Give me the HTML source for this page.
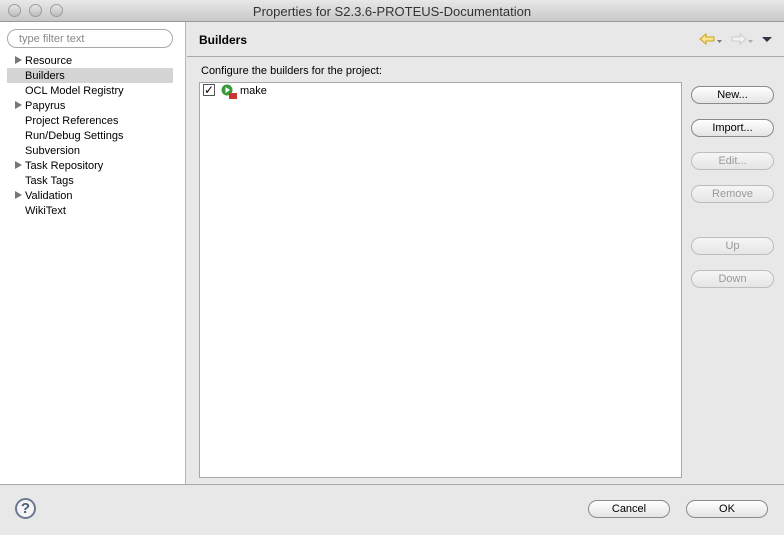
<!DOCTYPE html>
<html><head><style>
*{margin:0;padding:0;box-sizing:border-box}
body{width:784px;height:535px;background:#e8e8e8;font-family:"Liberation Sans",sans-serif;font-size:11px;color:#000;position:relative;overflow:hidden}
.a{position:absolute}
.title{left:0;top:0;width:784px;height:22px;background:linear-gradient(#e8e8e8,#c8c8c8);border-bottom:1px solid #9a9a9a;text-align:center;font-size:13px;line-height:23px;color:#333}
.dot{width:13px;height:13px;border-radius:50%;background:linear-gradient(#e6e6e6,#bdbdbd);border:1px solid #9c9c9c;top:4px}
.left{left:0;top:22px;width:186px;height:462px;background:#fff;border-right:1px solid #b5b5b5}
.filter{left:7px;top:29px;width:166px;height:19px;border:1px solid #a8a8a8;border-radius:10px;color:#888;font-size:11px;line-height:19px;padding-left:11px;background:#fff}
.item{left:25px;height:15px;line-height:15px;font-size:11px}
.tri{left:15px;width:0;height:0;border-left:7px solid #777;border-top:4px solid transparent;border-bottom:4px solid transparent}
.btn{left:691px;width:83px;height:18px;border:1px solid #8a8a8a;border-radius:9px;background:linear-gradient(#fff,#e4e4e4);text-align:center;line-height:17px;font-size:11px}
.dis{color:#999;border-color:#bdbdbd;background:linear-gradient(#f6f6f6,#e6e6e6)}
</style></head><body>
<div class="a title">Properties for S2.3.6-PROTEUS-Documentation</div>
<div class="a dot" style="left:8px"></div><div class="a dot" style="left:29px"></div><div class="a dot" style="left:50px"></div>
<div class="a left"></div>
<div class="a filter">type filter text</div>
<div class="a" style="left:7px;top:68px;width:166px;height:15px;background:#d4d4d4"></div>
<div class="a tri" style="top:56px"></div><div class="a item" style="top:54px">Resource</div>
<div class="a item" style="top:69px">Builders</div>
<div class="a item" style="top:84px">OCL Model Registry</div>
<div class="a tri" style="top:101px"></div><div class="a item" style="top:99px">Papyrus</div>
<div class="a item" style="top:114px">Project References</div>
<div class="a item" style="top:129px">Run/Debug Settings</div>
<div class="a item" style="top:144px">Subversion</div>
<div class="a tri" style="top:161px"></div><div class="a item" style="top:159px">Task Repository</div>
<div class="a item" style="top:174px">Task Tags</div>
<div class="a tri" style="top:191px"></div><div class="a item" style="top:189px">Validation</div>
<div class="a item" style="top:204px">WikiText</div>
<div class="a" style="left:187px;top:56px;width:597px;height:1px;background:#a8a8a8"></div>
<div class="a" style="left:199px;top:33px;font-weight:bold;font-size:12px">Builders</div>
<svg class="a" style="left:698px;top:31px" width="80" height="16"><path d="M2 8 L8 3 V6 H16 V10 H8 V13 Z" fill="#fce48a" stroke="#c9a227"/><path d="M19 9 h5 l-2.5 3z" fill="#777"/><path d="M48 8 L42 3 V6 H34 V10 H42 V13 Z" fill="#f2f2f2" stroke="#ccc"/><path d="M50 9 h5 l-2.5 3z" fill="#aaa"/><path d="M64 6 h10 l-5 5z" fill="#334"/></svg>
<div class="a" style="left:201px;top:65px">Configure the builders for the project:</div>
<div class="a" style="left:199px;top:82px;width:483px;height:396px;background:#fff;border:1px solid #a8a8a8"></div>
<div class="a" style="left:203px;top:84px;width:12px;height:12px;border:1px solid #555;background:#fff;font-size:12px;line-height:10px;text-align:center">✓</div>
<svg class="a" style="left:221px;top:84px" width="18" height="16"><circle cx="6" cy="6" r="5.5" fill="#3a9a3a"/><path d="M4.5 3 L9 6 L4.5 9z" fill="#fff"/><rect x="8" y="9" width="8" height="6" fill="#c33"/></svg>
<div class="a" style="left:240px;top:85px">make</div>
<div class="a btn" style="top:86px">New...</div>
<div class="a btn" style="top:119px">Import...</div>
<div class="a btn dis" style="top:152px">Edit...</div>
<div class="a btn dis" style="top:185px">Remove</div>
<div class="a btn dis" style="top:237px">Up</div>
<div class="a btn dis" style="top:270px">Down</div>
<div class="a" style="left:0;top:484px;width:784px;height:1px;background:#a8a8a8"></div>
<div class="a" style="left:15px;top:498px;width:21px;height:21px;border:2px solid #6b7a93;border-radius:50%;color:#4a5a78;font-weight:bold;font-size:15px;text-align:center;line-height:17px;background:#f4f4f4">?</div>
<div class="a btn" style="left:588px;top:500px;width:82px">Cancel</div>
<div class="a btn" style="left:686px;top:500px;width:82px">OK</div>
</body></html>
